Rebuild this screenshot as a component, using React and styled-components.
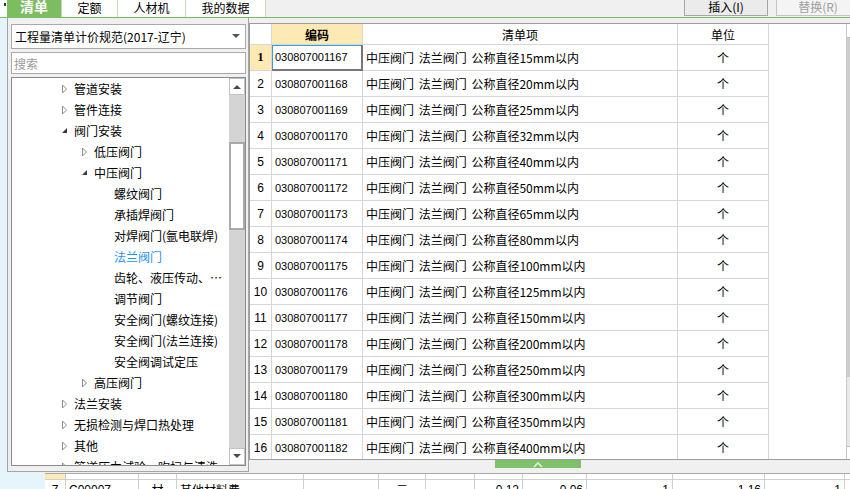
import React from "react";
import styled, { createGlobalStyle } from "styled-components";

const GlobalStyle = createGlobalStyle`
  html, body {
    margin: 0;
    padding: 0;
  }
  body {
    font-family: "Noto Sans CJK SC", "Liberation Sans", sans-serif;
    font-size: 12px;
    color: #000;
  }
  * {
    box-sizing: border-box;
  }
`;

const Screen = styled.div`
  position: relative;
  width: 850px;
  height: 489px;
  overflow: hidden;
  background: #f0f0f0;
  display: flex;
  flex-direction: column;
`;

const TopBar = styled.div`
  flex: none;
  height: 18px;
  display: flex;
  border-bottom: 1px solid #74bf5c;
  background: #f0f0f0;
`;

const Corner = styled.div`
  width: 7px;
  background: #fff;
  padding: 3px 0 0 4px;
  &::after {
    content: "";
    display: block;
    width: 2px;
    height: 3px;
    background: #333;
  }
`;

const Tab = styled.div`
  width: ${(p) => p.$w}px;
  height: 17px;
  text-align: center;
  background: ${(p) => (p.$active ? "#7cbd62" : "#fff")};
  color: ${(p) => (p.$active ? "#fff" : "#000")};
  font-weight: ${(p) => (p.$active ? "bold" : "normal")};
  font-size: ${(p) => (p.$active ? "14px" : "12px")};
  line-height: ${(p) => (p.$active ? "13px" : "15px")};
  border-right: 1px solid #c4dcb8;
`;

const ButtonGroup = styled.div`
  margin-left: auto;
  margin-right: -10px;
  display: flex;
  gap: 8px;
`;

const Button = styled.div`
  flex: none;
  width: 84px;
  height: 16px;
  border: 1px solid ${(p) => (p.$disabled ? "#c4c4c4" : "#a6a6a6")};
  border-top: none;
  background: ${(p) => (p.$disabled ? "#f4f4f4" : "#ebebeb")};
  color: ${(p) => (p.$disabled ? "#a0a0a0" : "#000")};
  text-align: center;
  font-size: 12px;
  line-height: 13px;
`;

const Main = styled.div`
  flex: 1;
  min-height: 0;
  display: flex;
`;

const SideStrip = styled.div`
  width: 45px;
  flex: none;
  background: #e6f4fb;
`;

const Workspace = styled.div`
  flex: 1;
  display: flex;
  flex-direction: column;
  min-width: 0;
`;

const Upper = styled.div`
  flex: none;
  height: 442px;
  display: flex;
`;

const Spacer = styled.div`
  width: 204px;
  flex: none;
`;

const GridPanel = styled.div`
  flex: 1;
  margin-top: 5px;
  display: flex;
  background: #fff;
  border-top: 1px solid #9c9c9c;
  border-left: 1px solid #9c9c9c;
  border-bottom: 1px solid #9c9c9c;
  overflow: hidden;
`;

const GridBody = styled.div`
  flex: 1;
  overflow: hidden;
`;

const GridRow = styled.div`
  display: flex;
  height: ${(p) => (p.$header ? 21 : 26)}px;
`;

const Cell = styled.div`
  flex: none;
  width: ${(p) => p.$w}px;
  height: 100%;
  display: flex;
  align-items: center;
  justify-content: ${(p) => p.$align || "flex-start"};
  padding: 0 2px;
  border-right: 1px solid #d6d6d6;
  border-bottom: 1px solid #d6d6d6;
  background: ${(p) => p.$bg || "#fff"};
  white-space: nowrap;
  overflow: hidden;
`;

const HeadText = styled.span`
  font-size: 12px;
  font-weight: ${(p) => (p.$bold ? "bold" : "normal")};
`;

const RowNum = styled.span`
  font-family: ${(p) => (p.$current ? '"Liberation Serif", serif' : '"Liberation Sans", sans-serif')};
  font-weight: ${(p) => (p.$current ? "bold" : "normal")};
  font-size: 12px;
`;

const Code = styled.span`
  font-family: "Liberation Sans", sans-serif;
  font-size: 11px;
  padding-left: 1px;
`;

const CodeCell = styled(Cell)`
  ${(p) =>
    p.$selected &&
    `
    border-right: 2px solid #777;
    border-bottom: 2px solid #777;
    box-shadow: inset 1px 1px 0 #3a9de2;
  `}
`;

const Desc = styled.span`
  font-size: 12px;
  padding-left: 1px;
  word-spacing: 2px;
`;

const VScroll = styled.div`
  width: 4px;
  flex: none;
  display: flex;
  flex-direction: column;
  border-left: 1px solid #c8c8c8;
  background: #e9e9e9;
`;

const VScrollPart = styled.div`
  flex: ${(p) => (p.$grow ? 1 : "none")};
  height: ${(p) => p.$h || 0}px;
  background: ${(p) => p.$bg};
  border-bottom: ${(p) => (p.$line ? "1px solid #bdbdbd" : "none")};
  border-top: ${(p) => (p.$lineTop ? "1px solid #bdbdbd" : "none")};
`;

const HandleStrip = styled.div`
  flex: none;
  height: 13px;
  background: #f0f0f0;
`;

const GreenHandle = styled.div`
  margin-left: 450px;
  width: 86px;
  height: 8px;
  background: #7fc06a;
  display: flex;
  justify-content: center;
  align-items: center;
`;

const BottomGrid = styled.div`
  flex: 1;
  background: #fff;
  border-top: 1px solid #a8a8a8;
  overflow: hidden;
`;

const BottomRow = styled.div`
  display: flex;
  height: ${(p) => p.$h}px;
`;

const BottomCell = styled.div`
  flex: none;
  width: ${(p) => p.$w}px;
  height: 100%;
  padding: 3px 3px 0;
  text-align: ${(p) => p.$align || "left"};
  line-height: 14px;
  font-family: ${(p) => (p.$num ? '"Liberation Sans", sans-serif' : "inherit")};
  font-size: 12px;
  background: ${(p) => p.$bg || "#fff"};
  border-right: 1px solid #cfcfcf;
  border-bottom: 1px solid #cfcfcf;
  white-space: nowrap;
  overflow: hidden;
`;

/* popup with the clause tree */
const Popup = styled.div`
  position: absolute;
  left: 7px;
  top: 18px;
  width: 242px;
  height: 454px;
  background: #f0f0f0;
  border: 1px solid #a4a4a4;
  border-top: none;
  padding: 6px 2px 5px 3px;
  display: flex;
  flex-direction: column;
  gap: 3px;
`;

const Select = styled.div`
  flex: none;
  height: 25px;
  background: #fff;
  border: 1px solid #a9a9a9;
  display: flex;
  align-items: center;
  justify-content: space-between;
  padding: 0 5px 0 3px;
  font-size: 12px;
`;

const Search = styled.input`
  flex: none;
  height: 22px;
  width: 100%;
  border: 1px solid #a9a9a9;
  background: #fff;
  padding: 0 2px;
  font-family: "Noto Sans CJK SC", sans-serif;
  font-size: 12px;
  outline: none;
  &::placeholder {
    color: #9a9a9a;
  }
`;

const TreeBox = styled.div`
  flex: 1;
  min-height: 0;
  display: flex;
  background: #fff;
  border: 1px solid #8a8a8a;
`;

const TreeList = styled.div`
  flex: 1;
  overflow: hidden;
`;

const TreeRow = styled.div`
  height: 21px;
  display: flex;
  align-items: center;
  padding-left: ${(p) => 46 + p.$level * 20}px;
  color: ${(p) => (p.$active ? "#1e92ee" : "#000")};
  white-space: nowrap;
`;

const Toggle = styled.span`
  width: 12px;
  margin-right: 4px;
  display: flex;
  justify-content: center;
  align-items: center;
`;

const TreeScroll = styled.div`
  width: 16px;
  flex: none;
  display: flex;
  flex-direction: column;
  background: #d4d4d4;
`;

const ScrollButton = styled.div`
  flex: none;
  height: 17px;
  background: #fff;
  border: 1px solid #c2c2c2;
  display: flex;
  align-items: center;
  justify-content: center;
`;

const ScrollTrack = styled.div`
  flex: ${(p) => (p.$grow ? 1 : "none")};
  height: ${(p) => p.$h || 0}px;
`;

const ScrollThumb = styled.div`
  flex: none;
  height: 88px;
  background: #fff;
  border: 2px solid #a9a9a9;
`;

const ClosedArrow = () => (
  <svg width="7" height="10" viewBox="0 0 7 10">
    <polygon points="1.5,1 5.5,5 1.5,9" fill="#fff" stroke="#8c8c8c" strokeWidth="1" />
  </svg>
);

const OpenArrow = () => (
  <svg width="7" height="7" viewBox="0 0 7 7">
    <polygon points="6,1 6,6 1,6" fill="#3a3a3a" />
  </svg>
);

const Caret = ({ up, color = "#555" }) => (
  <svg width="8" height="5" viewBox="0 0 8 5">
    <polygon points={up ? "0,5 4,1 8,5" : "0,0 8,0 4,4"} fill={color} />
  </svg>
);

const tabs = [
  { label: "清单", w: 55, active: true },
  { label: "定额", w: 56 },
  { label: "人材机", w: 68 },
  { label: "我的数据", w: 80 },
];

const tree = [
  { label: "管道安装", level: 0, state: "closed" },
  { label: "管件连接", level: 0, state: "closed" },
  { label: "阀门安装", level: 0, state: "open" },
  { label: "低压阀门", level: 1, state: "closed" },
  { label: "中压阀门", level: 1, state: "open" },
  { label: "螺纹阀门", level: 2 },
  { label: "承插焊阀门", level: 2 },
  { label: "对焊阀门(氩电联焊)", level: 2 },
  { label: "法兰阀门", level: 2, active: true },
  { label: "齿轮、液压传动、…", level: 2 },
  { label: "调节阀门", level: 2 },
  { label: "安全阀门(螺纹连接)", level: 2 },
  { label: "安全阀门(法兰连接)", level: 2 },
  { label: "安全阀调试定压", level: 2 },
  { label: "高压阀门", level: 1, state: "closed" },
  { label: "法兰安装", level: 0, state: "closed" },
  { label: "无损检测与焊口热处理", level: 0, state: "closed" },
  { label: "其他", level: 0, state: "closed" },
  { label: "管道压力试验、吹扫与清洗", level: 0, state: "closed" },
];

const sizes = [15, 20, 25, 32, 40, 50, 65, 80, 100, 125, 150, 200, 250, 300, 350, 400];

const rows = sizes.map((d, i) => ({
  no: i + 1,
  code: "0308070011" + (67 + i),
  name: `中压阀门 法兰阀门 公称直径${d}mm以内`,
  unit: "个",
}));

const cols = { no: 22, code: 91, name: 315, unit: 91 };

const bottomCols = [21, 73, 38, 127, 75, 47, 49, 48, 64, 86, 92, 80, 40];
const bottomRow = [
  { t: "7", align: "center", num: true },
  { t: "C00007", num: true },
  { t: "材", align: "center" },
  { t: "其他材料费" },
  { t: "" },
  { t: "元", align: "center" },
  { t: "" },
  { t: "0.12", align: "right", num: true },
  { t: "0.06", align: "right", num: true },
  { t: "1", align: "right", num: true },
  { t: "1.16", align: "right", num: true },
  { t: "1", align: "right", num: true },
  { t: "" },
];

const App = () => {
  return (
    <Screen>
      <GlobalStyle />
      <TopBar>
        <Corner />
        {tabs.map((t) => (
          <Tab key={t.label} $w={t.w} $active={t.active}>
            {t.label}
          </Tab>
        ))}
        <ButtonGroup>
          <Button>插入(I)</Button>
          <Button $disabled>替换(R)</Button>
        </ButtonGroup>
      </TopBar>

      <Main>
        <SideStrip />
        <Workspace>
          <Upper>
            <Spacer />
            <GridPanel>
              <GridBody>
                <GridRow $header>
                  <Cell $w={cols.no} />
                  <Cell $w={cols.code} $align="center" $bg="#fde9b4">
                    <HeadText $bold>编码</HeadText>
                  </Cell>
                  <Cell $w={cols.name} $align="center">
                    <HeadText>清单项</HeadText>
                  </Cell>
                  <Cell $w={cols.unit} $align="center">
                    <HeadText>单位</HeadText>
                  </Cell>
                </GridRow>
                {rows.map((r) => (
                  <GridRow key={r.code}>
                    <Cell $w={cols.no} $align="center" $bg={r.no === 1 ? "#fde9b4" : "#fff"}>
                      <RowNum $current={r.no === 1}>{r.no}</RowNum>
                    </Cell>
                    <CodeCell $w={cols.code} $selected={r.no === 1}>
                      <Code>{r.code}</Code>
                    </CodeCell>
                    <Cell $w={cols.name}>
                      <Desc>{r.name}</Desc>
                    </Cell>
                    <Cell $w={cols.unit} $align="center">
                      {r.unit}
                    </Cell>
                  </GridRow>
                ))}
              </GridBody>
              <VScroll>
                <VScrollPart $h={14} $bg="#fff" $line />
                <VScrollPart $h={339} $bg="#cdcdcd" />
                <VScrollPart $grow $bg="#e9e9e9" />
                <VScrollPart $h={13} $bg="#fff" $lineTop />
              </VScroll>
            </GridPanel>
          </Upper>

          <HandleStrip>
            <GreenHandle>
              <svg width="12" height="7" viewBox="0 0 12 7">
                <polyline points="2,6 6,2 10,6" fill="none" stroke="#e6f4df" strokeWidth="1.6" />
              </svg>
            </GreenHandle>
          </HandleStrip>

          <BottomGrid>
            <BottomRow $h={6}>
              {bottomCols.map((w, i) => (
                <BottomCell key={i} $w={w} $bg={i === 0 ? "#fde9b4" : "#fff"} />
              ))}
            </BottomRow>
            <BottomRow $h={20}>
              {bottomCols.map((w, i) => (
                <BottomCell key={i} $w={w} $align={bottomRow[i].align} $num={bottomRow[i].num}>
                  {bottomRow[i].t}
                </BottomCell>
              ))}
            </BottomRow>
          </BottomGrid>
        </Workspace>
      </Main>

      <Popup>
        <Select>
          <span>工程量清单计价规范(2017-辽宁)</span>
          <Caret />
        </Select>
        <Search placeholder="搜索" readOnly />
        <TreeBox>
          <TreeList>
            {tree.map((item) => (
              <TreeRow key={item.label} $level={item.level} $active={item.active}>
                <Toggle>
                  {item.state === "closed" && <ClosedArrow />}
                  {item.state === "open" && <OpenArrow />}
                </Toggle>
                {item.label}
              </TreeRow>
            ))}
          </TreeList>
          <TreeScroll>
            <ScrollButton>
              <Caret up color="#4a4a4a" />
            </ScrollButton>
            <ScrollTrack $h={47} />
            <ScrollThumb />
            <ScrollTrack $grow />
            <ScrollButton>
              <Caret color="#4a4a4a" />
            </ScrollButton>
          </TreeScroll>
        </TreeBox>
      </Popup>
    </Screen>
  );
};

export default App;
